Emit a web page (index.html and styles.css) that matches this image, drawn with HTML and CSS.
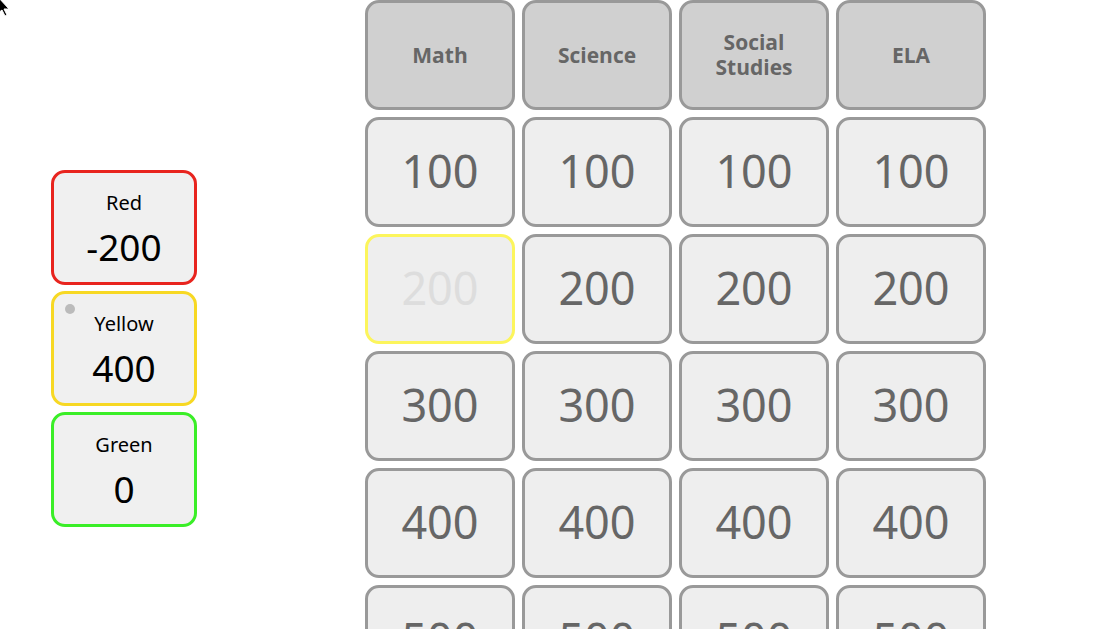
FILE: index.html
```html
<!DOCTYPE html>
<html>
<head>
<meta charset="utf-8">
<link rel="stylesheet" href="styles.css">
</head>
<body>
<svg class="cursor" width="14" height="16" viewBox="0 0 14 16"><path d="M-2 -3 L9 9 L4 9 L7 15 L5 16 L2 10 L-2 13 Z" fill="#000" stroke="#fff" stroke-width="1"/></svg>
<div class="page">
  <div class="teams">
    <div class="team team-red"><div class="team-name">Red</div><div class="team-score">-200</div></div>
    <div class="team team-yellow"><span class="dot"></span><div class="team-name">Yellow</div><div class="team-score">400</div></div>
    <div class="team team-green"><div class="team-name">Green</div><div class="team-score">0</div></div>
  </div>
  <div class="board">
    <div class="cell head">Math</div>
    <div class="cell head">Science</div>
    <div class="cell head">Social<br>Studies</div>
    <div class="cell head">ELA</div>
    <div class="cell">100</div><div class="cell">100</div><div class="cell">100</div><div class="cell">100</div>
    <div class="cell used">200</div><div class="cell">200</div><div class="cell">200</div><div class="cell">200</div>
    <div class="cell">300</div><div class="cell">300</div><div class="cell">300</div><div class="cell">300</div>
    <div class="cell">400</div><div class="cell">400</div><div class="cell">400</div><div class="cell">400</div>
    <div class="cell">500</div><div class="cell">500</div><div class="cell">500</div><div class="cell">500</div>
  </div>
</div>
</body>
</html>
```

FILE: styles.css
```css
html, body {
  margin: 0;
  padding: 0;
  background: #fff;
  overflow: hidden;
  height: 629px;
}
body {
  font-family: "Open Sans", "Noto Sans", sans-serif;
}
.cursor {
  position: absolute;
  left: 0;
  top: 0;
  z-index: 5;
}
.page {
  display: flex;
  align-items: flex-start;
  padding-left: 51px;
}
.teams {
  width: 146px;
  margin-top: 170px;
  display: flex;
  flex-direction: column;
  gap: 6px;
}
.team {
  position: relative;
  box-sizing: border-box;
  height: 115px;
  border: 3px solid #999;
  border-radius: 14px;
  background: #f0f0f0;
  display: flex;
  flex-direction: column;
  align-items: center;
  color: #000;
  font-family: "Noto Sans", "Open Sans", sans-serif;
}
.team-red { border-color: #e8241e; }
.team-yellow { border-color: #f7d823; }
.team-green { border-color: #3aee27; }
.team-name {
  font-size: 20px;
  line-height: 24px;
  margin-top: 18px;
}
.team-score {
  font-size: 37px;
  line-height: 44px;
  margin-top: 10px;
}
.dot {
  position: absolute;
  left: 11px;
  top: 10px;
  width: 10px;
  height: 10px;
  border-radius: 50%;
  background: #bbb;
}
.board {
  margin-left: 168px;
  display: grid;
  grid-template-columns: repeat(4, 150px);
  grid-auto-rows: 110px;
  gap: 7px;
}
.cell {
  box-sizing: border-box;
  border: 3px solid #999;
  border-radius: 14px;
  background: #eee;
  display: flex;
  align-items: center;
  justify-content: center;
  text-align: center;
  color: #666;
  font-family: "Noto Sans", "Open Sans", sans-serif;
  font-size: 45px;
  padding-bottom: 4px;
}
.cell.head {
  background: #d0d0d0;
  font-family: "Open Sans", sans-serif;
  font-weight: 700;
  font-size: 21px;
  line-height: 25px;
  padding-bottom: 0;
}
.cell.used {
  border-color: #fcf55c;
  color: #ddd;
}
```
